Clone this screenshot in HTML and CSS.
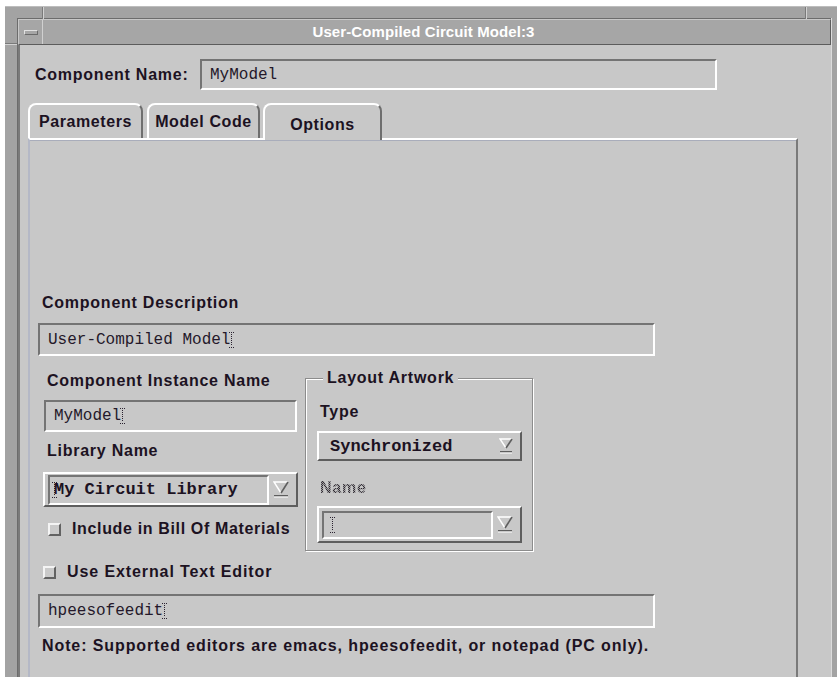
FILE: index.html
```html
<!DOCTYPE html>
<html>
<head>
<meta charset="utf-8">
<title>User-Compiled Circuit Model:3</title>
<link rel="stylesheet" href="styles.css">
</head>
<body>
<div class="window">
  <span class="handle handle-tl"></span>
  <span class="handle handle-tr"></span>
  <span class="handle handle-lt"></span>
  <div class="frame-inner">
    <div class="titlebar">
      <div class="menu-btn"><span class="menu-bar"></span></div>
      <div class="title">User-Compiled Circuit Model:3</div>
    </div>
    <div class="client">
      <div class="name-row">
        <div class="lbl name-lbl">Component Name:</div>
        <div class="field name-field"><span class="mono">MyModel</span></div>
      </div>

      <div class="tabs">
        <div class="tab tab-params">Parameters</div>
        <div class="tab tab-code">Model Code</div>
        <div class="tab tab-options active">Options</div>
      </div>

      <div class="panel">
        <div class="lbl indent">Component Description</div>
        <div class="field desc-field">
          <span class="mono">User-Compiled Model</span><svg class="caret" width="5" height="16" viewBox="0 0 5 16"><path d="M2.5 2V14" stroke="#2a2230" stroke-dasharray="1 1"/><path d="M0 0.5H5M0 15.5H5" stroke="#2a2230" stroke-dasharray="1 1"/></svg>
        </div>

        <div class="cols">
          <div class="left-col">
            <div class="lbl indent">Component Instance Name</div>
            <div class="field inst-field">
              <span class="mono">MyModel</span><svg class="caret" width="5" height="16" viewBox="0 0 5 16"><path d="M2.5 2V14" stroke="#2a2230" stroke-dasharray="1 1"/><path d="M0 0.5H5M0 15.5H5" stroke="#2a2230" stroke-dasharray="1 1"/></svg>
            </div>
            <div class="lbl indent lib-lbl">Library Name</div>
            <div class="combo lib-combo">
              <div class="field combo-field lib-field">
                <svg class="caret lead" width="5" height="16" viewBox="0 0 5 16"><path d="M2.5 2V14" stroke="#2a2230" stroke-dasharray="1 1"/><path d="M0 0.5H5M0 15.5H5" stroke="#2a2230" stroke-dasharray="1 1"/></svg><span class="mono-b">My Circuit Library</span>
              </div>
              <div class="combo-arrow">
                <svg width="16" height="17" viewBox="0 0 16 17"><polygon points="1,1 15,1 8,12" fill="#c8c8c8"/><polyline points="8,12 1,1 15,1" fill="none" stroke="#ffffff" stroke-width="1.4"/><line x1="15" y1="1" x2="8" y2="12" stroke="#5e5e5e" stroke-width="1.6"/><rect x="1" y="14" width="14" height="1.5" fill="#5e5e5e"/><rect x="1" y="15.5" width="14" height="1" fill="#ffffff"/></svg>
              </div>
            </div>
            <div class="check-row bom-row">
              <span class="checkbox"></span>
              <span class="lbl">Include in Bill Of Materials</span>
            </div>
          </div>

          <fieldset class="group">
            <legend class="lbl legend">Layout Artwork</legend>
            <div class="lbl type-lbl">Type</div>
            <div class="option-btn">
              <span class="mono-b">Synchronized</span>
              <svg width="14" height="16" viewBox="0 0 14 16"><polygon points="1,1 13,1 7,10" fill="#c8c8c8"/><polyline points="7,10 1,1 13,1" fill="none" stroke="#ffffff" stroke-width="1.4"/><line x1="13" y1="1" x2="7" y2="10" stroke="#5e5e5e" stroke-width="1.6"/><rect x="1" y="13" width="12" height="1.5" fill="#5e5e5e"/><rect x="1" y="14.5" width="12" height="1" fill="#ffffff"/></svg>
            </div>
            <div class="lbl stipple">Name</div>
            <div class="combo name-combo">
              <div class="field combo-field name-field-c">
                <svg class="caret lead" width="5" height="16" viewBox="0 0 5 16"><path d="M2.5 2V14" stroke="#2a2230" stroke-dasharray="1 1"/><path d="M0 0.5H5M0 15.5H5" stroke="#2a2230" stroke-dasharray="1 1"/></svg>
              </div>
              <div class="combo-arrow">
                <svg width="16" height="17" viewBox="0 0 16 17"><polygon points="1,1 15,1 8,12" fill="#c8c8c8"/><polyline points="8,12 1,1 15,1" fill="none" stroke="#ffffff" stroke-width="1.4"/><line x1="15" y1="1" x2="8" y2="12" stroke="#5e5e5e" stroke-width="1.6"/><rect x="1" y="14" width="14" height="1.5" fill="#5e5e5e"/><rect x="1" y="15.5" width="14" height="1" fill="#ffffff"/></svg>
              </div>
            </div>
          </fieldset>
        </div>

        <div class="check-row ext-row">
          <span class="checkbox"></span>
          <span class="lbl">Use External Text Editor</span>
        </div>
        <div class="field ext-field">
          <span class="mono">hpeesofeedit</span><svg class="caret" width="5" height="16" viewBox="0 0 5 16"><path d="M2.5 2V14" stroke="#2a2230" stroke-dasharray="1 1"/><path d="M0 0.5H5M0 15.5H5" stroke="#2a2230" stroke-dasharray="1 1"/></svg>
        </div>
        <div class="lbl indent note">Note: Supported editors are emacs, hpeesofeedit, or notepad (PC only).</div>
      </div>
    </div>
  </div>
</div>
</body>
</html>
```

FILE: styles.css
```css
html, body {
  margin: 0;
  padding: 0;
}

body {
  width: 837px;
  height: 677px;
  overflow: hidden;
  background: #ffffff;
  font-family: "Liberation Sans", Arial, sans-serif;
  color: #1c1222;
}

/* ---------- window frame ---------- */
.window {
  position: relative;
  width: 850px;
  height: 700px;
  margin: 6px 0 0 5px;
  padding: 11px 0 0 12px;
  box-sizing: border-box;
  background: #a3a3a3;
  border-top: 1px solid #bdbdbd;
}

.handle {
  position: absolute;
  background: #d2d2d2;
  box-shadow: -1px 0 0 #7a7a7a;
}
.handle-tl { left: 38px; top: 0; width: 1px; height: 12px; }
.handle-tr { left: 801px; top: 0; width: 1px; height: 12px; }
.handle-lt { left: 0; top: 37px; width: 12px; height: 1px; box-shadow: 0 -1px 0 #7a7a7a; }

.frame-inner {
  width: 813px;
  height: 100%;
  display: flex;
  flex-direction: column;
  border-top: 1px solid #6c6c6c;
  border-left: 1px solid #6c6c6c;
  box-shadow: 1px 0 0 #dcdcdc;
}

/* ---------- title bar ---------- */
.titlebar {
  display: flex;
  height: 26px;
  box-sizing: border-box;
  background: #a6a6a6;
  border-top: 1px solid #c8c8c8;
  border-left: 1px solid #c8c8c8;
  border-bottom: 1px solid #5c5c5c;
  border-right: 1px solid #5c5c5c;
}

.menu-btn {
  width: 24px;
  flex: none;
  display: flex;
  align-items: center;
  justify-content: center;
  border-right: 1px solid #d0d0d0;
  box-sizing: border-box;
}

.menu-bar {
  display: block;
  width: 12px;
  height: 3px;
  background: #a6a6a6;
  border: 1px solid;
  border-color: #e2e2e2 #6a6a6a #6a6a6a #e2e2e2;
  margin-top: 1px;
}

.title {
  flex: 1;
  text-align: center;
  color: #ffffff;
  font-weight: bold;
  font-size: 15px;
  letter-spacing: 0.1px;
  line-height: 24px;
  padding-right: 26px;
}

/* ---------- client area ---------- */
.client {
  flex: 1;
  background: #c8c8c8;
  border-left: 2px solid #7a7a7a;
  padding: 14px 0 0 8px;
}

.lbl {
  font-weight: bold;
  font-size: 16px;
  letter-spacing: 0.75px;
  line-height: 20px;
  height: 20px;
  white-space: nowrap;
}

.indent { margin-left: 4px; }

.mono {
  font-family: "Liberation Mono", "Courier New", monospace;
  font-size: 16px;
  color: #24182a;
}

.mono-b {
  font-family: "Liberation Mono", "Courier New", monospace;
  font-weight: bold;
  font-size: 17px;
  color: #1c1222;
}

.caret {
  display: inline-block;
  vertical-align: -3px;
  margin-left: -1px;
}
.caret.lead { margin: 0 -3px 0 0; }

/* sunken text field */
.field {
  box-sizing: border-box;
  display: flex;
  align-items: center;
  padding-left: 8px;
  background: #c8c8c8;
  border: 2px solid;
  border-color: #747474 #ffffff #ffffff #747474;
}

.name-row {
  display: flex;
  align-items: center;
  height: 31px;
  padding-left: 7px;
}
.name-lbl { width: 165px; flex: none; }
.name-field { width: 517px; height: 31px; }

/* ---------- tabs ---------- */
.tabs {
  display: flex;
  align-items: flex-end;
  height: 36px;
  margin-top: 12px;
}

.tab {
  box-sizing: border-box;
  height: 35px;
  display: flex;
  align-items: center;
  justify-content: center;
  font-weight: bold;
  font-size: 16px;
  letter-spacing: 0.6px;
  background: #c8c8c8;
  border: 2px solid;
  border-bottom: none;
  border-color: #ffffff #6e6e6e transparent #ffffff;
  border-radius: 8px 8px 0 0;
}

.tab-params { width: 115px; }
.tab-code { width: 113px; margin-left: 4px; }
.tab-options {
  width: 119px;
  margin-left: 3px;
  height: 37px;
  margin-bottom: -2px;
  padding-top: 5px;
  position: relative;
  z-index: 1;
}

/* ---------- tab page ---------- */
.panel {
  width: 770px;
  height: 600px;
  box-sizing: border-box;
  background: #c8c8c8;
  border-top: 2px solid #ffffff;
  border-left: 2px solid #b4b8c6;
  border-right: 2px solid #7a7a7a;
  box-shadow: inset 0 1px 0 #a9adbb;
  padding: 153px 0 0 8px;
}

.desc-field {
  width: 617px;
  height: 33px;
  margin-top: 10px;
}

.cols {
  display: flex;
  align-items: flex-start;
  margin-top: 13px;
}

.left-col {
  width: 255px;
  margin-left: 5px;
  padding-top: 2px;
  display: flex;
  flex-direction: column;
}

.inst-field {
  width: 253px;
  height: 32px;
  margin: 9px 0 0 1px;
}

.lib-lbl { margin-top: 9px; }

/* raised combo box with an inner text field */
.combo {
  box-sizing: border-box;
  display: flex;
  align-items: center;
  padding: 0 3px;
  background: #c8c8c8;
  border: 2px solid;
  border-color: #ffffff #5e5e5e #5e5e5e #ffffff;
}

.combo-field {
  height: calc(100% - 4px);
  padding-left: 2px;
}

.combo-arrow {
  flex: 1;
  display: flex;
  justify-content: center;
  align-items: center;
}

.lib-combo {
  width: 255px;
  height: 35px;
  margin-top: 11px;
}
.lib-field { width: 221px; height: 30px; }

.check-row {
  display: flex;
  align-items: center;
  height: 20px;
}

.checkbox {
  flex: none;
  width: 13px;
  height: 13px;
  box-sizing: border-box;
  background: #cacaca;
  border: 2px solid;
  border-color: #f4f4f4 #626262 #626262 #f4f4f4;
}

.bom-row { margin: 12px 0 0 5px; }
.bom-row .checkbox { margin-right: 11px; }
.bom-row .lbl { letter-spacing: 0.65px; }

/* ---------- layout artwork group ---------- */
.group {
  margin: 0 0 0 7px;
  width: 228px;
  box-sizing: border-box;
  padding: 15px 9px 7px 11px;
  border: 1px solid #8c8c8c;
  box-shadow: inset 1px 1px 0 #ffffff, 1px 1px 0 #ffffff;
  min-width: 0;
}

.legend {
  padding: 0 4px;
  margin-left: 6px;
  height: 18px;
  line-height: 18px;
  background: #c8c8c8;
}

.type-lbl { margin-left: 3px; }

.option-btn {
  box-sizing: border-box;
  width: 205px;
  height: 30px;
  margin-top: 9px;
  display: flex;
  align-items: center;
  justify-content: space-between;
  padding: 0 7px 0 11px;
  border: 2px solid;
  border-color: #ffffff #5e5e5e #5e5e5e #ffffff;
}

.stipple {
  display: inline-block;
  margin: 17px 0 0 3px;
  color: transparent;
  background: repeating-conic-gradient(#2e2832 0 25%, #9c9c9c 0 50%) 0 0 / 2px 2px;
  -webkit-background-clip: text;
  background-clip: text;
}

.name-combo {
  width: 205px;
  height: 37px;
  margin-top: 8px;
}
.name-field-c { width: 171px; height: 28px; padding-left: 6px; }

/* ---------- bottom rows ---------- */
.ext-row { margin: 11px 0 0 5px; }
.ext-row .checkbox { margin-right: 11px; }
.ext-row .lbl { letter-spacing: 0.9px; }

.ext-field {
  width: 617px;
  height: 34px;
  margin-top: 12px;
}

.note { margin-top: 8px; letter-spacing: 0.9px; }
```
